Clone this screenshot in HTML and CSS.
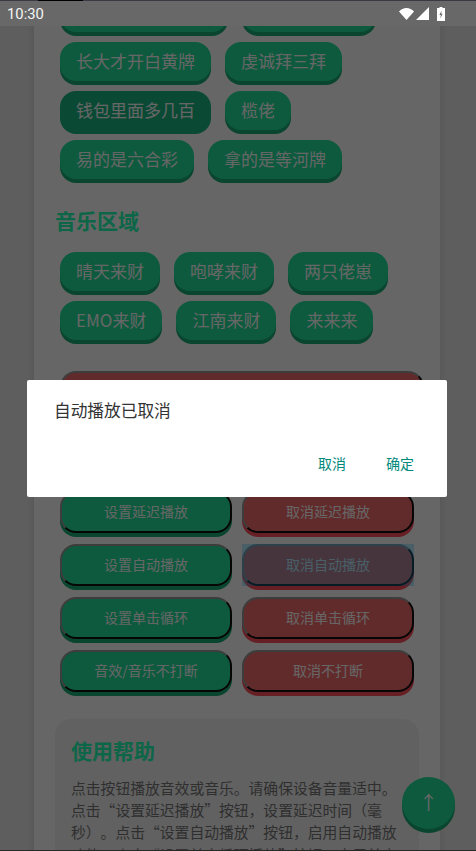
FILE: index.html
```html
<!DOCTYPE html>
<html lang="zh-CN">
<head>
  <meta charset="UTF-8">
  <meta name="viewport" content="width=device-width, initial-scale=1.0">
  <title>音效板</title>
  <link rel="stylesheet" href="styles.css">
</head>
<body>
  <div class="app">
    <div class="status-bar">
      <span class="status-time">10:30</span>
      <div class="status-icons">
        <svg class="icon-wifi" width="15" height="12" viewBox="0 0 15 12"><path d="M0 3.6C2 1.4 4.6 0 7.5 0S13 1.4 15 3.6L7.5 12z" fill="#fff"/></svg>
        <svg class="icon-signal" width="13" height="13" viewBox="0 0 13 13"><path d="M13 0V13H0z" fill="#fff"/></svg>
        <svg class="icon-battery" width="8" height="14" viewBox="0 0 8 14"><path fill-rule="evenodd" d="M2.5 0H5.5V1H8V14H0V1H2.5zM4.6 3.5L2.4 8H3.8L3.3 11.5L5.6 6.8H4.2z" fill="#fff"/></svg>
      </div>
    </div>

    <div class="scroller">
      <main class="card">
        <!-- first row is scrolled away under the status bar -->
        <div class="tags">
          <button class="tag tag-long"></button>
          <button class="tag tag-mid"></button>
          <button class="tag">长大才开白黄牌</button>
          <button class="tag">虔诚拜三拜</button>
          <button class="tag tag-pressed">钱包里面多几百</button>
          <button class="tag">榄佬</button>
          <button class="tag">易的是六合彩</button>
          <button class="tag">拿的是等河牌</button>
        </div>

        <h2 class="section-title">音乐区域</h2>
        <div class="tags">
          <button class="tag">晴天来财</button>
          <button class="tag">咆哮来财</button>
          <button class="tag">两只佬崽</button>
          <button class="tag">EMO来财</button>
          <button class="tag">江南来财</button>
          <button class="tag">来来来</button>
        </div>

        <button class="ctrl ctrl-red ctrl-wide"></button>

        <div class="controls">
          <button class="ctrl ctrl-green">设置延迟播放</button>
          <button class="ctrl ctrl-red">取消延迟播放</button>
          <button class="ctrl ctrl-green">设置自动播放</button>
          <button class="ctrl ctrl-red ctrl-tapped">取消自动播放</button>
          <button class="ctrl ctrl-green">设置单击循环</button>
          <button class="ctrl ctrl-red">取消单击循环</button>
          <button class="ctrl ctrl-green">音效/音乐不打断</button>
          <button class="ctrl ctrl-red">取消不打断</button>
        </div>

        <section class="help">
          <h2 class="section-title help-title">使用帮助</h2>
          <p class="help-text">点击按钮播放音效或音乐。请确保设备音量适中。点击“设置延迟播放”按钮，设置延迟时间（毫秒）。点击“设置自动播放”按钮，启用自动播放功能。点击“设置单击循环播放”按钮，启用单击</p>
        </section>
      </main>
      <button class="to-top">↑</button>
    </div>
    <div class="bottom-edge"></div>

    <div class="scrim">
      <div class="dialog">
        <p class="dialog-message">自动播放已取消</p>
        <div class="dialog-actions">
          <button class="dialog-btn">取消</button>
          <button class="dialog-btn">确定</button>
        </div>
      </div>
    </div>
  </div>
</body>
</html>
```

FILE: styles.css
```css
/* General Styles */
body {
  margin: 0;
  font-family: "Noto Sans CJK SC", "Noto Sans", sans-serif;
  background-color: #ebebeb;
}

button {
  font-family: inherit;
  cursor: pointer;
}

.app {
  position: relative;
  display: flex;
  flex-direction: column;
  height: 100vh;
  overflow: hidden;
}

/* Status bar */
.status-bar {
  position: relative;
  z-index: 2;
  flex: none;
  display: flex;
  justify-content: space-between;
  align-items: center;
  box-sizing: border-box;
  height: 26px;
  padding: 0 31px 0 7px;
  border-top: 1px solid #3a3a46;
  background: #686868;
}

.status-bar::before {
  content: "";
  position: absolute;
  top: -1px;
  left: 38px;
  width: 45px;
  height: 1px;
  background: #000;
}

.status-time {
  padding-top: 1px;
  font-family: Roboto, sans-serif;
  font-size: 14.8px;
  color: #f4f4f4;
}

.status-icons {
  display: flex;
  align-items: center;
}

.icon-wifi {
  margin-right: 2px;
}

.icon-signal {
  margin-right: 8px;
}

/* Card */
.scroller {
  position: relative;
  flex: 1;
  min-height: 0;
  overflow: hidden;
}

.card {
  box-sizing: border-box;
  width: 406px;
  margin: -33px 0 0 34px;
  padding: 0 21px;
  background: #fff;
  box-shadow: 0 0 8px rgba(0, 0, 0, 0.12);
}

.section-title {
  margin: 26px 0 17px;
  font-size: 21px;
  font-weight: 700;
  line-height: 30px;
  color: #23ffb4;
}

.tags {
  display: flex;
  flex-wrap: wrap;
  gap: 10px 14px;
  padding-left: 5px;
}

.tag {
  height: 39px;
  padding: 0 16px 2px;
  border: none;
  border-radius: 16px;
  background: #21e19b;
  box-shadow: 0 4px 0 #19ac78;
  font-size: 17px;
  color: #fff;
}

.tag-long {
  width: 168px;
}

.tag-mid {
  width: 134px;
}

.tag-pressed {
  background: #1ab884;
  box-shadow: 0 4px 0 #1ab884;
}

/* Control buttons */
.controls {
  display: grid;
  grid-template-columns: 172px 172px;
  gap: 11px 10px;
  padding-left: 5px;
}

.ctrl {
  position: relative;
  height: 42px;
  padding: 0 0 3px;
  border: 2px solid;
  border-color: #999 #111 #111 #999;
  border-radius: 16px;
  font-size: 14px;
  color: #fff;
}

.ctrl-green {
  background: #21e19b;
  box-shadow: 0 4px 0 #19ac78;
}

.ctrl-red {
  background: #f56c6c;
  box-shadow: 0 4px 0 #ff505c;
}

.ctrl-wide {
  display: block;
  width: 364px;
  height: 60px;
  margin: 31px 0 60px 5px;
}

.ctrl-tapped::after {
  content: "";
  position: absolute;
  inset: -2px;
  background: rgba(12, 190, 255, 0.3);
}

/* Help */
.help {
  margin-top: 27px;
  padding: 16px;
  border-radius: 16px;
  background: #f2f2f2;
}

.help-title {
  margin: 0 0 12px;
}

.help-text {
  margin: 0;
  font-size: 14.8px;
  line-height: 22.2px;
  color: #777;
  text-spacing-trim: space-all;
}

.to-top {
  position: absolute;
  left: 402px;
  top: 751px;
  width: 53px;
  height: 52px;
  padding: 0 0 3px;
  border: none;
  border-radius: 50%;
  background: #21e19b;
  box-shadow: 0 4px 0 #19ac78;
  font-size: 19px;
  color: #fff;
}

.bottom-edge {
  flex: none;
  height: 1px;
  background: #666;
}

/* Dialog */
.scrim {
  position: absolute;
  inset: 26px 0 0;
  z-index: 1;
  display: flex;
  justify-content: center;
  align-items: center;
  background: rgba(0, 0, 0, 0.6);
}

.dialog {
  box-sizing: border-box;
  width: 420px;
  height: 117px;
  margin-right: 2px;
  padding: 17px 33px 0 27px;
  border-radius: 2px;
  background: #fff;
}

.dialog-message {
  margin: 0;
  font-size: 16.7px;
  line-height: 26px;
  color: #333;
}

.dialog-actions {
  display: flex;
  justify-content: flex-end;
  gap: 40px;
  margin-top: 26px;
}

.dialog-btn {
  padding: 0;
  border: none;
  background: none;
  font-size: 14px;
  line-height: 28px;
  color: #00897b;
}
```
